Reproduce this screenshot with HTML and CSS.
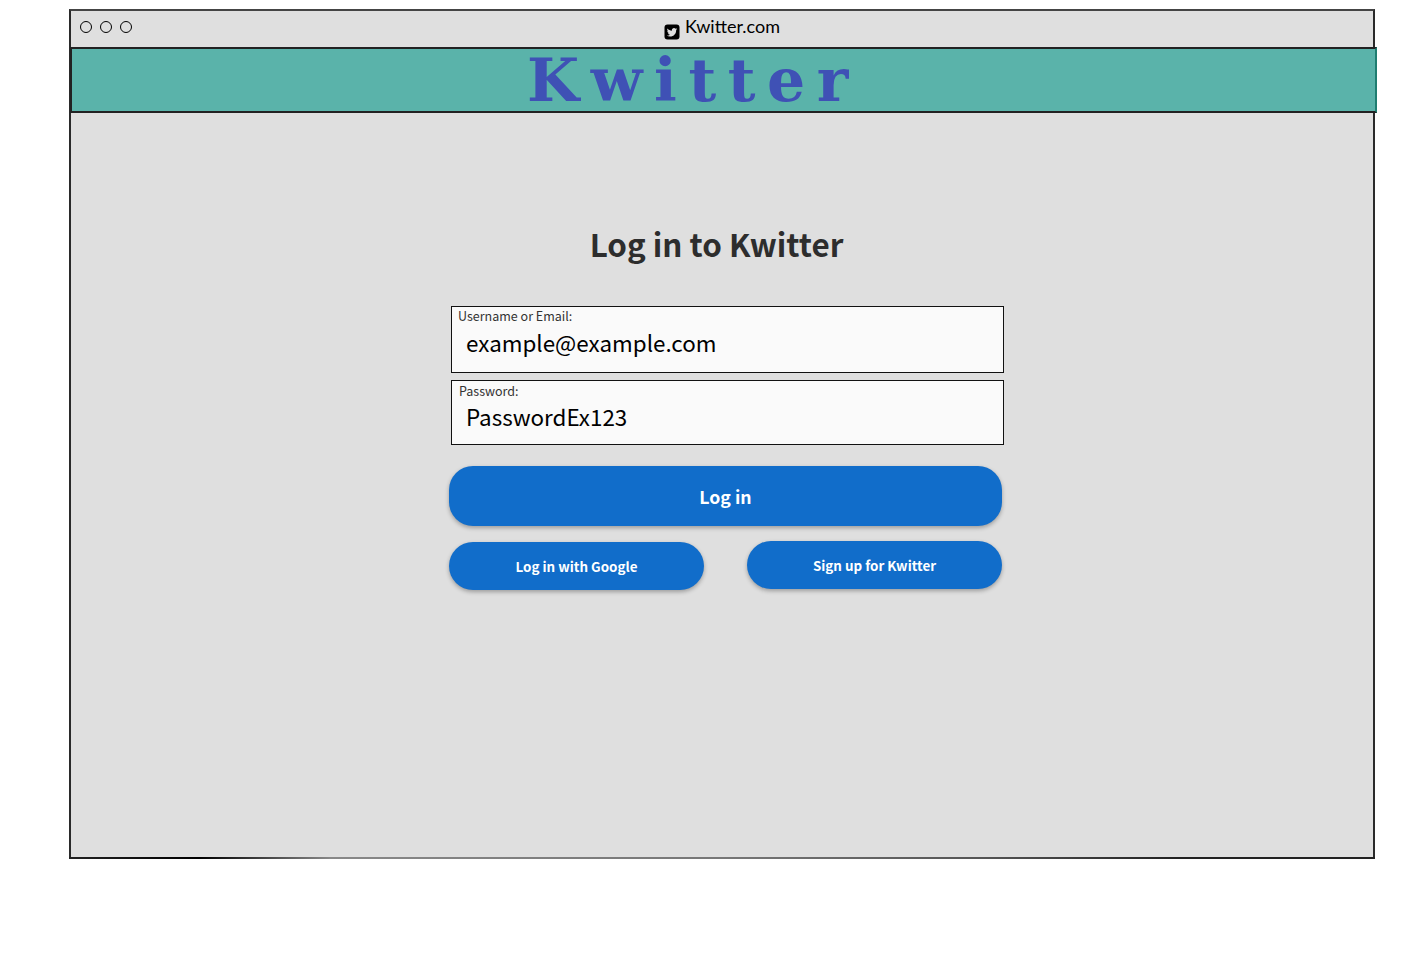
FILE: index.html
```html
<!DOCTYPE html>
<html lang="en">
<head>
<meta charset="utf-8">
<title>Kwitter</title>
<link rel="stylesheet" href="styles.css">
</head>
<body>
<div class="window">
  <div class="titlebar">
    <div class="dots"><span class="dot"></span><span class="dot"></span><span class="dot"></span></div>
    <div class="address">
      <svg class="tw" viewBox="0 0 16 16" aria-hidden="true"><rect x="0.5" y="0.5" width="15" height="15" rx="3" fill="#000"/><g transform="translate(2 2) scale(.5)"><path fill="#dfdfdf" d="M22.46 6c-.77.35-1.6.58-2.46.69.88-.53 1.56-1.37 1.88-2.38-.83.5-1.75.85-2.72 1.05C18.37 4.5 17.26 4 16 4c-2.35 0-4.27 1.92-4.27 4.29 0 .34.04.67.11.98C8.28 9.09 5.11 7.38 3 4.79c-.37.63-.58 1.37-.58 2.15 0 1.49.75 2.81 1.91 3.56-.71 0-1.37-.2-1.95-.5v.03c0 2.08 1.48 3.82 3.44 4.21a4.22 4.22 0 0 1-1.93.07 4.28 4.28 0 0 0 4 2.98 8.521 8.521 0 0 1-5.33 1.84c-.34 0-.68-.02-1.02-.06C3.44 20.29 5.7 21 8.12 21 16 21 20.33 14.46 20.33 8.79c0-.19 0-.37-.01-.56.84-.6 1.56-1.36 2.14-2.23z"/></g></svg>
      <span class="url">Kwitter.com</span>
    </div>
  </div>
  <header class="banner"><h1 class="brand">Kwitter</h1></header>
  <main class="content">
    <h2 class="heading">Log in to Kwitter</h2>
    <form class="form">
      <label class="field field-user"><span class="field-label">Username or Email:</span><input class="field-input" type="text" value="example@example.com"></label>
      <label class="field field-pass"><span class="field-label">Password:</span><input class="field-input" type="text" value="PasswordEx123"></label>
      <button class="btn btn-main" type="button">Log in</button>
      <div class="btn-row">
        <button class="btn btn-small btn-google" type="button">Log in with Google</button>
        <button class="btn btn-small" type="button">Sign up for Kwitter</button>
      </div>
    </form>
  </main>
</div>
</body>
</html>
```
FILE: styles.css
```css
* { box-sizing: border-box; }
html, body { margin: 0; background: #fff; }
body {
  padding: 9px 0 0 69px;
  height: 968px;
  overflow: hidden;
  font-family: "Noto Sans CJK SC", "Noto Sans", sans-serif;
}
.window {
  width: 1306px;
  height: 850px;
  background: #dfdfdf;
  border: 2px solid #2a2a2a;
  border-bottom: 0;
  border-top-color: #444;
  position: relative;
  display: flex;
  flex-direction: column;
}
.window::after {
  content: "";
  position: absolute;
  left: -2px;
  right: -2px;
  bottom: 0;
  height: 2px;
  background: linear-gradient(90deg, #222 0, #000 10%, #888 20%, #777 50%, #555 70%, #222 85%, #222 100%);
}
.titlebar {
  height: 36px;
  display: flex;
  align-items: center;
  position: relative;
}
.dots { display: flex; gap: 8px; padding: 0 0 5px 9px; }
.dot {
  width: 12px;
  height: 12px;
  border: 1.5px solid #000;
  border-radius: 50%;
}
.address {
  position: absolute;
  left: 592.5px;
  top: 4px;
  display: flex;
  align-items: flex-start;
  gap: 5.5px;
}
.tw { width: 16px; height: 16px; margin-top: 9px; }
.url {
  font-family: "Lato", sans-serif;
  font-weight: 400;
  font-size: 18px;
  line-height: 22px;
  color: #000;
}
.banner {
  height: 66px;
  width: 1307px;
  flex: none;
  margin-left: -1px;
  background: #5ab3aa;
  border: 2px solid #222;
  border-right-color: #1f7d70;
  display: flex;
  align-items: center;
  padding-left: 455px;
}
.brand {
  margin: 0;
  font-family: "DejaVu Serif", serif;
  font-weight: 700;
  font-size: 60px;
  line-height: 60px;
  letter-spacing: 11.6px;
  color: #3f51b5;
}
.content { flex: 1; padding: 111px 0 0 378px; }
.heading {
  margin: 0 0 42px;
  width: 553px;
  padding-right: 18px;
  text-align: center;
  font-size: 31.4px;
  line-height: 40px;
  font-weight: 700;
  color: #2d2d2d;
}
.form { width: 553px; display: flex; flex-direction: column; }
.field {
  display: flex;
  flex-direction: column;
  margin-left: 2px;
  width: 553px;
  background: #fafafa;
  border: 1px solid #111;
}
.field-user { height: 67px; margin-bottom: 7px; }
.field-pass { height: 65px; margin-bottom: 21px; }
.field-label {
  font-size: 12.5px;
  line-height: 18px;
  color: #333;
  padding-left: 6px;
}
.field-pass .field-label { padding: 1px 0 0 7px; }
.field-input {
  border: 0;
  background: none;
  outline: 0;
  padding: 0 0 0 14px;
  margin-top: 0;
  height: 34px;
  font: inherit;
  font-size: 22.4px;
  color: #000;
}
.field-pass .field-input { margin-top: -1px; }
.btn {
  border: 0;
  background: #116dca;
  color: #fff;
  font-family: inherit;
  font-weight: 700;
  box-shadow: 0 2px 4px rgba(0, 0, 0, .3);
  padding: 0;
}
.btn-main { height: 60px; width: 553px; border-radius: 24px; font-size: 17.7px; }
.btn-row {
  display: flex;
  justify-content: space-between;
  align-items: flex-start;
  margin-top: 15px;
}
.btn-small { width: 255px; height: 48px; border-radius: 24px; font-size: 13.4px; }
.btn-google { margin-top: 1px; }
```
